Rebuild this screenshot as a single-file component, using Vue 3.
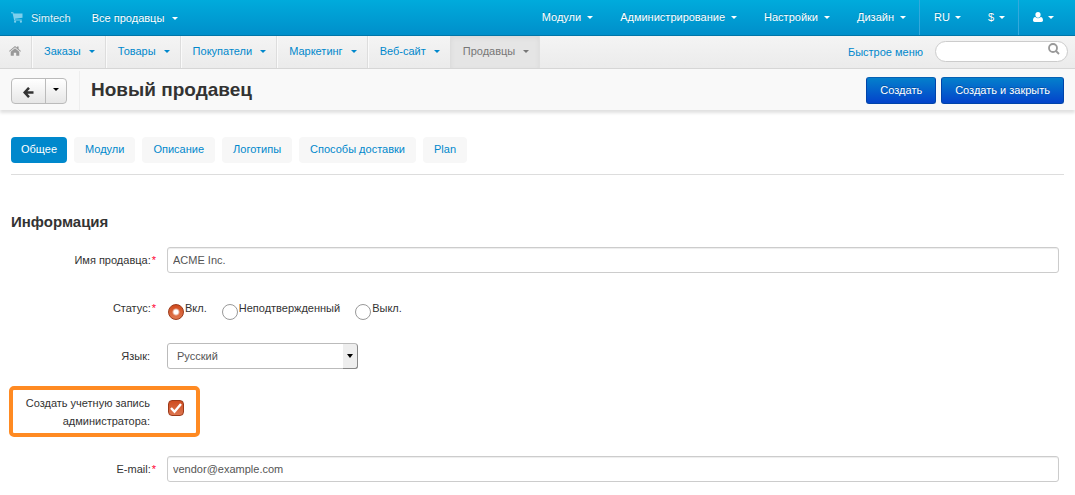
<script setup>
import { ref } from 'vue'

const topMenu = ['Модули', 'Администрирование', 'Настройки', 'Дизайн']
const mainMenu = ['Заказы', 'Товары', 'Покупатели', 'Маркетинг', 'Веб-сайт', 'Продавцы']
const tabs = ['Общее', 'Модули', 'Описание', 'Логотипы', 'Способы доставки', 'Plan']
const statuses = [
  { value: 'A', label: 'Вкл.' },
  { value: 'P', label: 'Неподтвержденный' },
  { value: 'D', label: 'Выкл.' }
]

const activeMenu = ref('Продавцы')
const activeTab = ref('Общее')
const search = ref('')
const name = ref('ACME Inc.')
const status = ref('A')
const language = ref('ru')
const createAdmin = ref(true)
const email = ref('vendor@example.com')
</script>

<template>
  <div class="page">
    <header class="topbar">
      <a class="brand" href="#">
        <svg class="cart" viewBox="0 0 12 11" aria-hidden="true">
          <path d="M0 .3h2.300l.3 1.200H11.500v4.200L4 6.700l.1.800h6.700v1H3.200L1.600 1.300H0z" />
          <circle cx="4.1" cy="9.7" r="1.1" />
          <circle cx="9.9" cy="9.7" r="1.1" />
        </svg>
        <span>Simtech</span>
      </a>
      <a class="vendors" href="#">Все продавцы<i class="caret"></i></a>
      <nav class="top-menu">
        <a v-for="item in topMenu" :key="item" href="#">{{ item }}<i class="caret"></i></a>
      </nav>
      <nav class="top-menu divided">
        <a href="#">RU<i class="caret"></i></a>
        <a href="#">$<i class="caret"></i></a>
      </nav>
      <nav class="top-menu divided">
        <a href="#" aria-label="Профиль">
          <svg class="user" viewBox="0 0 10 10" aria-hidden="true">
            <path d="M5 0a2.6 2.8 0 0 1 2.6 2.8A2.7 2.9 0 0 1 5 5.7a2.7 2.9 0 0 1-2.6-2.9A2.6 2.8 0 0 1 5 0zM2.3 4.9a3.8 3.8 0 0 0 5.4 0C9.300 5 10 6.600 10 8.300 10 9.400 9.300 10 8.300 10H1.700C.7 10 0 9.400 0 8.300 0 6.600.7 5 2.300 4.900z" />
          </svg>
          <i class="caret"></i>
        </a>
      </nav>
    </header>

    <div class="subbar">
      <nav class="main-menu">
        <a class="home" href="#" aria-label="Главная">
          <svg viewBox="0 0 12 10" aria-hidden="true">
            <path d="M6 2.300 10.300 5.800V9.300q0 .5-.5.5H7.200V6.800H4.800V9.800H2.200q-.5 0-.5-.5V5.800z" />
            <path d="M6 0 7.900 1.600V.5H9.600V3L12 5l-.6.700L6 1.300.6 5.700 0 5z" />
          </svg>
        </a>
        <a v-for="item in mainMenu" :key="item" href="#" :class="{ active: item === activeMenu }" @click.prevent="activeMenu = item">{{ item }}<i class="caret"></i></a>
      </nav>
      <a class="quick" href="#">Быстрое меню</a>
      <form class="search" @submit.prevent>
        <input v-model="search" type="text" aria-label="Поиск" />
        <button type="submit" aria-label="Найти">
          <svg viewBox="0 0 12 12" aria-hidden="true">
            <circle cx="5" cy="5" r="4" />
            <path d="M8 8l3 3" />
          </svg>
        </button>
      </form>
    </div>

    <div class="actions">
      <div class="back">
        <button type="button" aria-label="Назад">
          <svg class="arrow" viewBox="0 0 11 11" aria-hidden="true">
            <path d="M6 .8 1.600 5.500 6 10.200M2 5.500H10.500" />
          </svg>
        </button>
        <button type="button" class="more" aria-label="Ещё"><i class="caret"></i></button>
      </div>
      <h1>Новый продавец</h1>
      <button type="button" class="primary">Создать</button>
      <button type="button" class="primary">Создать и закрыть</button>
    </div>

    <main>
      <div class="tabs">
        <button v-for="tab in tabs" :key="tab" type="button" :class="{ active: tab === activeTab }" @click="activeTab = tab">{{ tab }}</button>
      </div>

      <form @submit.prevent>
        <h2>Информация</h2>
        <div class="row">
          <label class="name required" for="vendor-name">Имя продавца:</label>
          <input id="vendor-name" v-model="name" class="text" type="text" />
        </div>
        <div class="row">
          <span id="status-label" class="name required">Статус:</span>
          <div class="radios" role="radiogroup" aria-labelledby="status-label">
            <label v-for="s in statuses" :key="s.value">
              <input v-model="status" type="radio" name="status" :value="s.value" />{{ s.label }}
            </label>
          </div>
        </div>
        <div class="row">
          <label class="name" for="language">Язык:</label>
          <div class="select">
            <select id="language" v-model="language">
              <option value="ru">Русский</option>
              <option value="en">English</option>
            </select>
            <span class="drop"><i class="caret"></i></span>
          </div>
        </div>
        <div class="row highlighted">
          <label class="name" for="create-admin">Создать учетную запись администратора:</label>
          <span class="check">
            <input id="create-admin" v-model="createAdmin" type="checkbox" />
            <svg viewBox="0 0 16 16" aria-hidden="true"><path d="M3 8l3.500 3.800L13 4" /></svg>
          </span>
        </div>
        <div class="row">
          <label class="name required" for="email">E-mail:</label>
          <input id="email" v-model="email" class="text" type="text" />
        </div>
      </form>
    </main>
  </div>
</template>

<style>
body {
  margin: 0;
  background: #fff;
}
</style>

<style scoped>
.page {
  font: 11px/18px "Liberation Sans", Arial, sans-serif;
  color: #333;
}
.page *,
.page *::before {
  box-sizing: border-box;
}
a {
  color: #08c;
  text-decoration: none;
}
button,
input,
select {
  font: inherit;
  color: inherit;
  margin: 0;
}
.caret {
  display: inline-block;
  flex: none;
  border: 3px solid transparent;
  border-top-color: currentColor;
  border-bottom: 0;
  margin-left: 5px;
}

.topbar {
  display: flex;
  height: 36px;
  background: linear-gradient(#00abdc, #008fca);
  border-bottom: 1px solid #0076a8;
}
.topbar a {
  display: flex;
  align-items: center;
  color: #fff;
  text-shadow: 0 -1px 0 rgba(0, 0, 0, 0.2);
}
.topbar .brand {
  gap: 8px;
  padding-left: 11px;
  color: #e0f4fb;
}
.cart {
  width: 12px;
  height: 11px;
  fill: #7dcfec;
}
.topbar .vendors {
  padding: 1px 0 0 21px;
}
.vendors .caret,
.main-menu .caret {
  margin-left: 8px;
}
.top-menu {
  display: flex;
}
.vendors + .top-menu {
  margin-left: auto;
}
.top-menu a {
  padding: 0 13px 1px 14px;
}
.vendors + .top-menu .caret {
  margin-left: 6px;
}
.divided {
  border-left: 1px solid #33a9dc;
}
.divided:last-child {
  padding-right: 8px;
}
.user {
  width: 10px;
  height: 10px;
  fill: #fff;
}

.subbar {
  display: flex;
  height: 33px;
  background: linear-gradient(#f4f4f4, #ebebeb);
  border-bottom: 1px solid #d6d6d6;
  padding-right: 7px;
}
.main-menu {
  display: flex;
  flex: 1;
}
.main-menu a {
  display: flex;
  align-items: center;
  padding: 0 10px 2px 12px;
  border-right: 1px solid #ddd;
  box-shadow: 1px 0 0 #fafafa;
}
.main-menu .home {
  padding: 0 10px 2px 9px;
}
.home svg {
  width: 12px;
  height: 10px;
  fill: #999;
}
.main-menu .active {
  color: #777;
  background: #e5e5e5;
  border-right-color: #e0e0e0;
  box-shadow: inset 0 2px 5px rgba(0, 0, 0, 0.05);
}
.quick {
  align-self: center;
  margin-right: 12px;
}
.search {
  display: flex;
  position: relative;
  align-self: center;
  width: 133px;
  margin-bottom: 2px;
}
.search input {
  width: 100%;
  height: 21px;
  padding: 0 28px 0 12px;
  border: 1px solid #ccc;
  border-radius: 11px;
  background: #fff;
}
.search button {
  position: absolute;
  top: 2px;
  right: 8px;
  display: flex;
  padding: 0;
  border: 0;
  background: none;
}
.search svg {
  width: 12px;
  height: 12px;
  fill: none;
  stroke: #999;
  stroke-width: 1.8;
}

.actions {
  display: flex;
  align-items: center;
  gap: 5px;
  height: 41px;
  padding: 2px 11px 0;
  background: #f9f9f9;
  box-shadow: 0 3px 3px rgba(0, 0, 0, 0.12);
}
.back {
  display: flex;
  width: 56px;
  height: 26px;
  border: 1px solid #bbb;
  border-radius: 4px;
  background: linear-gradient(#fff, #e6e6e6);
}
.back button {
  display: flex;
  align-items: center;
  justify-content: center;
  flex: 1;
  padding: 0;
  border: 0;
  background: none;
}
.back .more {
  flex: 0 0 21px;
  border-left: 1px solid #bbb;
  color: #000;
}
.more .caret {
  margin: 0 0 2px;
}
.arrow {
  width: 11px;
  height: 11px;
  margin-top: 3px;
  fill: none;
  stroke: #333;
  stroke-width: 2.5;
}
h1 {
  flex: 1;
  align-self: stretch;
  display: flex;
  align-items: center;
  margin: 0 0 0 7px;
  padding: 0 0 2px 11px;
  border-left: 1px solid #eee;
  font-size: 19px;
  line-height: 24px;
}
.primary {
  height: 27px;
  padding: 0 13px 1px;
  border: 1px solid #04a;
  border-top-color: #0661b4;
  border-radius: 3px;
  background: linear-gradient(#0480cc, #0443cb);
  color: #fff;
  text-shadow: 0 -1px 0 rgba(0, 0, 0, 0.25);
}

main {
  padding: 27px 16px 13px 11px;
}
.tabs {
  display: flex;
  gap: 7px;
  padding-bottom: 11px;
  margin-right: -5px;
  border-bottom: 1px solid #ddd;
}
.tabs button {
  height: 26px;
  padding: 0 11px 2px;
  border: 0;
  border-radius: 4px;
  background: #f7f7f7;
  color: #08c;
}
.tabs .active {
  padding: 0 10px 2px;
  background: #08c;
  color: #fff;
}
h2 {
  margin: 38px 0 16px;
  font-size: 15px;
  line-height: 18px;
}
.row {
  position: relative;
  display: flex;
  min-height: 26px;
  margin-bottom: 22px;
}
.name {
  flex: 0 0 139px;
  margin-right: 17px;
  padding-top: 4px;
  text-align: right;
}
.required {
  flex-basis: 145px;
  margin-right: 11px;
}
.required::after {
  content: "*";
  margin-left: 1px;
  color: #f03;
}
.text {
  flex: 1;
  min-width: 0;
  height: 26px;
  padding: 0 5px;
  border: 1px solid #ccc;
  border-radius: 3px;
  background: #fff;
  box-shadow: inset 0 1px 1px rgba(0, 0, 0, 0.075);
  color: #555;
}
.radios {
  display: flex;
  gap: 14px;
  padding-top: 4px;
}
.radios label {
  display: flex;
}
.radios input {
  appearance: none;
  width: 16px;
  height: 16px;
  margin: 5px 1px 0;
  border: 1px solid #999;
  border-radius: 50%;
  background: #fff;
}
.radios input:checked {
  border-color: #9c3a1a;
  background: radial-gradient(circle, #fff 2px, transparent 4px), linear-gradient(#d04a1c, #e07850);
}
.select {
  position: relative;
  width: 191px;
  height: 26px;
}
select {
  appearance: none;
  width: 100%;
  height: 100%;
  padding: 0 20px 0 9px;
  border: 1px solid #bbb;
  border-radius: 3px;
  background: #fff;
  color: #555;
}
.drop {
  position: absolute;
  top: 1px;
  right: 0;
  bottom: 0;
  display: flex;
  align-items: center;
  justify-content: center;
  width: 15px;
  border: solid #888;
  border-width: 0 1px 1px 0;
  border-radius: 0 3px 3px 0;
  background: #eee;
  color: #000;
  pointer-events: none;
}
.drop .caret {
  margin: 0;
  border-top-width: 4px;
}
.highlighted {
  min-height: 43px;
}
.highlighted .name {
  padding-top: 3px;
}
.highlighted::before {
  content: "";
  position: absolute;
  top: -5px;
  left: -2px;
  width: 191px;
  height: 51px;
  border: 4px solid #ff8a22;
  border-radius: 5px;
  pointer-events: none;
}
.check {
  position: relative;
  width: 16px;
  height: 16px;
  margin: 9px 1px 0;
}
.check input {
  appearance: none;
  display: block;
  width: 16px;
  height: 16px;
  border: 1px solid #999;
  border-radius: 4px;
}
.check input:checked {
  border-color: #9c3a1a;
  background: linear-gradient(#cf4c20, #dd7650);
}
.check svg {
  position: absolute;
  inset: 0;
  fill: none;
  stroke: #fff;
  stroke-width: 2.4;
  pointer-events: none;
}
.check input:not(:checked) + svg {
  display: none;
}
</style>
